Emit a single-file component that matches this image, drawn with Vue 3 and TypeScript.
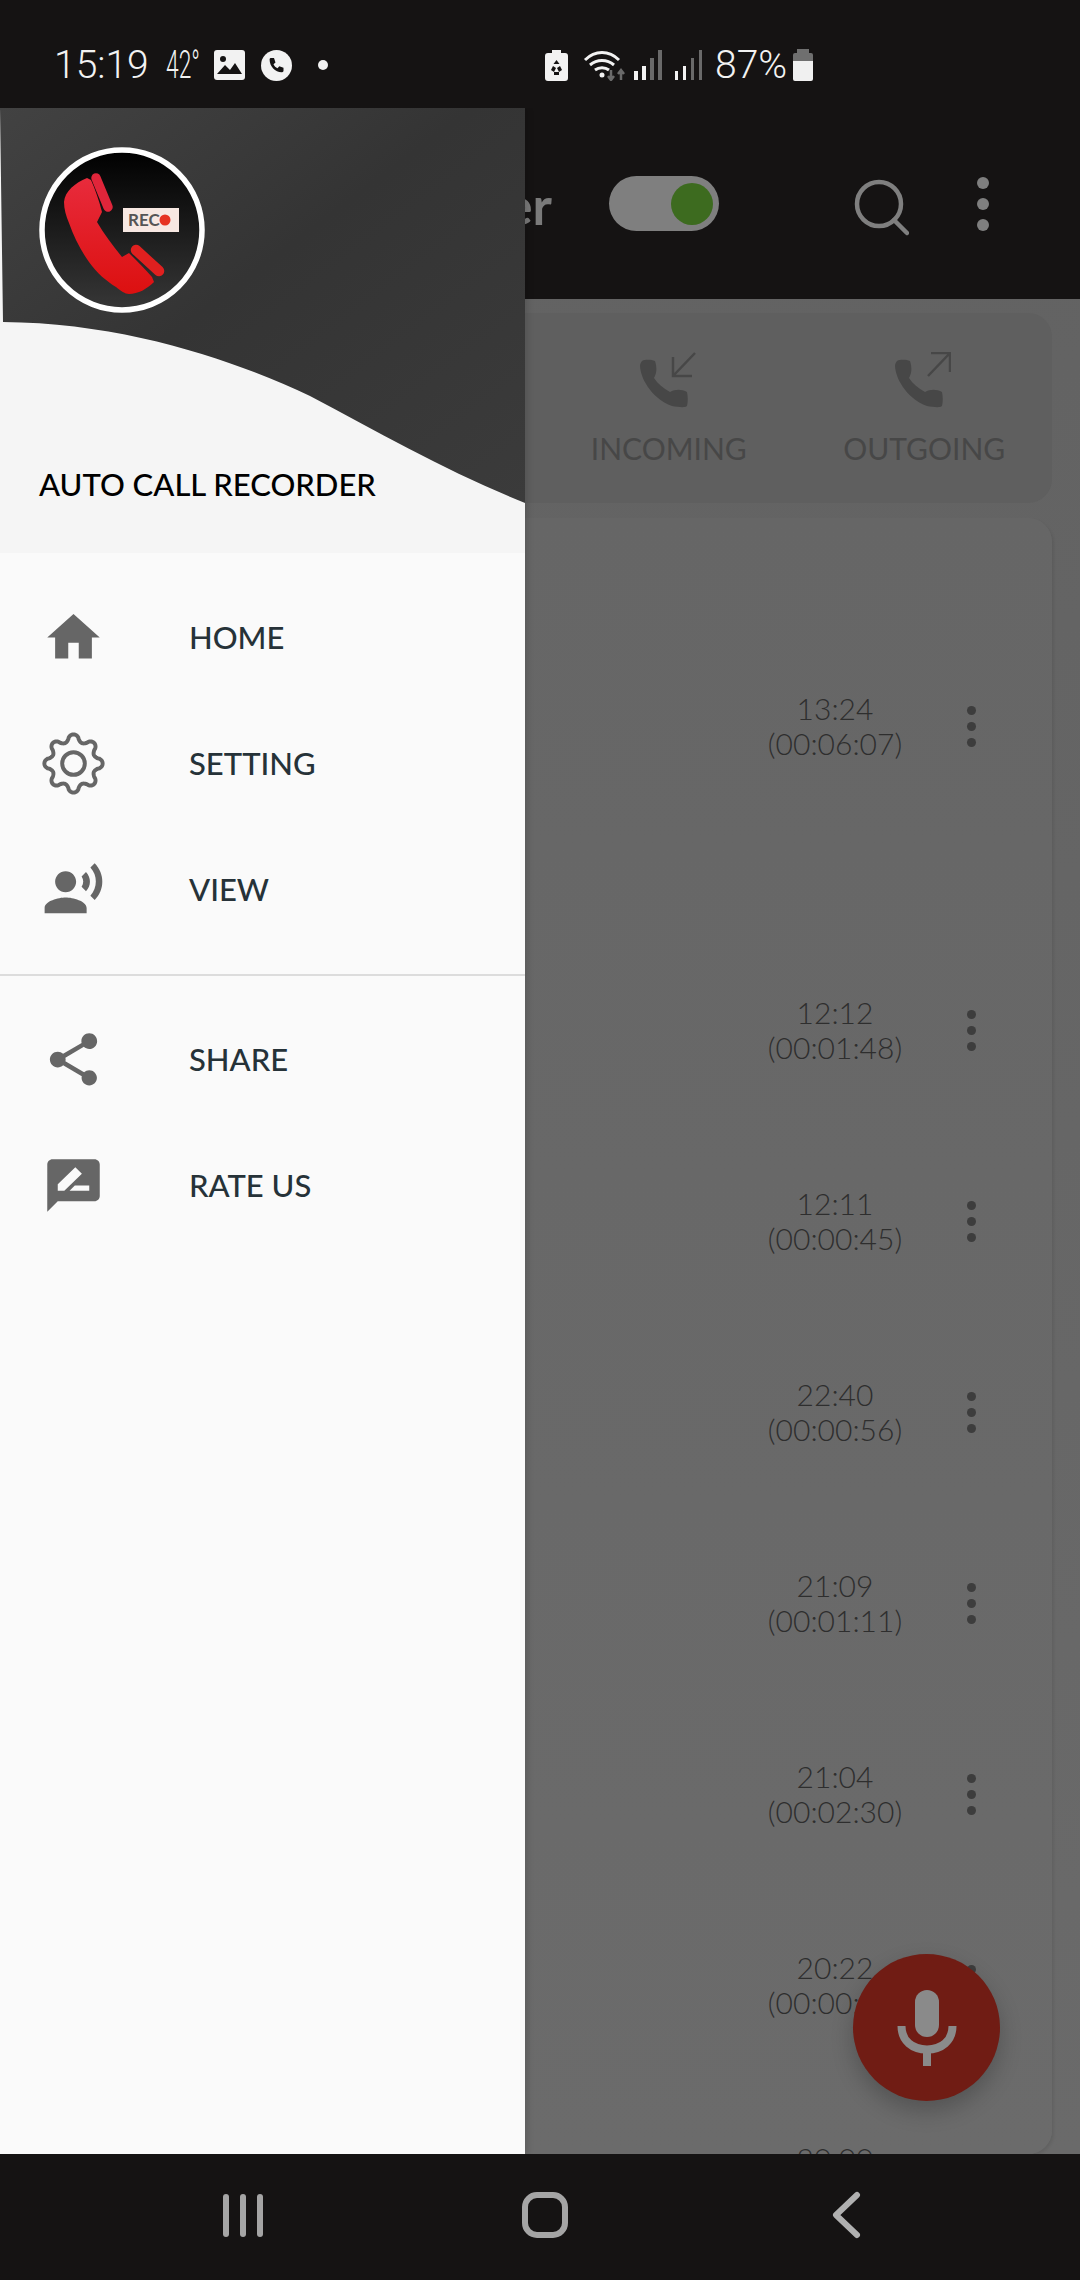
<template>
  <div class="phone">
    <div class="status-bar">
      <span class="clock">15:19</span>
      <span class="temp">42°</span>
      <svg class="st-image" width="31" height="30" viewBox="0 0 31 30">
        <rect width="31" height="30" rx="3" fill="#f2f2f2" />
        <circle cx="9" cy="9" r="3" fill="#151313" />
        <path d="M3 24l8-9 5 5 5-7 7 11z" fill="#151313" />
      </svg>
      <svg class="st-call" width="31" height="31" viewBox="0 0 31 31">
        <circle cx="15.5" cy="15.5" r="15.5" fill="#f2f2f2" />
        <path d="M10 8h3l1.500 4.500-2 1.800c.8 1.800 2.200 3.200 4 4l1.800-2 4.200 1.500v3c0 .8-.6 1.400-1.400 1.400C14.500 22.500 8.600 16.500 8.600 9.400 8.600 8.600 9.200 8 10 8z" fill="#151313" />
      </svg>
      <span class="st-dot"></span>
      <svg class="st-saver" width="23" height="31" viewBox="0 0 23 31">
        <path d="M7 0h9v3h4c2 0 3 1 3 3v22c0 2-1 3-3 3H3c-2 0-3-1-3-3V6c0-2 1-3 3-3h4z" fill="#f2f2f2" />
        <path d="M11.500 10l3 4h-6zM6 20l2-4 3 2-2 4zM17 20l-2-4-3 2 2 4zM9 22h5v3H9z" fill="#151313" />
      </svg>
      <svg class="st-wifi" width="44" height="33" viewBox="0 0 44 33">
        <path d="M2 12C12 2 26 2 36 12M7 17c7-6 17-6 24 0M12 22c4-3 10-3 14 0" fill="none" stroke="#f2f2f2" stroke-width="3" />
        <circle cx="19" cy="27" r="2.500" fill="#f2f2f2" />
        <path d="M28 22v10M25 28l3 4 3-4M38 32V22M35 26l3-4 3 4" fill="none" stroke="#6a6a6a" stroke-width="2.500" />
      </svg>
      <div class="signal">
        <i class="bar on" style="height: 9px"></i><i class="bar on" style="height: 14px"></i><i class="bar" style="height: 22px"></i><i class="bar" style="height: 30px"></i>
      </div>
      <div class="signal second">
        <i class="bar on" style="height: 9px"></i><i class="bar on" style="height: 14px"></i><i class="bar" style="height: 22px"></i><i class="bar" style="height: 30px"></i>
      </div>
      <span class="percent">87%</span>
      <div class="battery"><span class="battery-cap"></span><span class="battery-fill"></span></div>
    </div>

    <div class="main">
      <div class="app">
        <header class="app-bar">
          <span class="app-title">Auto Call Recorder</span>
          <div class="toggle"><span class="toggle-thumb"></span></div>
          <svg class="search" width="56" height="58" viewBox="0 0 56 58">
            <circle cx="26" cy="26" r="22" fill="none" stroke="#7f7f7f" stroke-width="4.500" />
            <path d="M41 42l13 13" stroke="#7f7f7f" stroke-width="4.500" stroke-linecap="round" />
          </svg>
          <div class="more">
            <span></span><span></span><span></span>
          </div>
        </header>

        <div class="tabs">
          <div class="tab tab-in">
            <svg width="56" height="56" viewBox="0 0 56 56">
              <path :d="handset" fill="#474747" />
              <path d="M55 1L33 24M33 5v19h19" fill="none" stroke="#474747" stroke-width="2.500" />
            </svg>
            <span>INCOMING</span>
          </div>
          <div class="tab">
            <svg width="56" height="56" viewBox="0 0 56 56">
              <path :d="handset" fill="#474747" />
              <path d="M33 24L55 1M36 1h19v19" fill="none" stroke="#474747" stroke-width="2.500" />
            </svg>
            <span>OUTGOING</span>
          </div>
        </div>

        <div class="list">
          <template v-for="(call, i) in calls" :key="i">
            <div v-if="call.header" class="list-header"></div>
            <div class="call-row">
              <div class="call-time">
                <span>{{ call.time }}</span>
                <span>({{ call.length }})</span>
              </div>
              <div class="call-more"><span></span><span></span><span></span></div>
            </div>
          </template>
        </div>
      </div>

      <button class="fab">
        <svg width="74" height="76" viewBox="0 0 74 76">
          <rect x="25" y="0" width="24" height="47" rx="12" fill="#8a8a8a" />
          <path d="M11.500 36c0 15 11 23.500 25.500 23.500s25.500-8.500 25.500-23.500" fill="none" stroke="#8a8a8a" stroke-width="8" />
          <rect x="33" y="60" width="8" height="16" fill="#8a8a8a" />
        </svg>
      </button>

      <aside class="drawer">
        <div class="drawer-head">
          <svg class="wave" width="525" height="446" viewBox="0 0 525 446">
            <defs>
              <linearGradient id="waveFill" x1="0" y1="0" x2="1" y2="1">
                <stop offset="0" stop-color="#424242" />
                <stop offset="0.45" stop-color="#343434" />
                <stop offset="1" stop-color="#3b3b3b" />
              </linearGradient>
            </defs>
            <path d="M0 0H525V395C450 365 380 325 310 288C240 255 130 215 3 214Z" fill="url(#waveFill)" />
          </svg>
          <svg class="logo" width="166" height="166" viewBox="0 0 166 166">
            <defs>
              <linearGradient id="logoBg" x1="0" y1="0" x2="0" y2="1">
                <stop offset="0" stop-color="#000000" />
                <stop offset="1" stop-color="#373737" />
              </linearGradient>
              <linearGradient id="logoRed" x1="0" y1="0" x2="0" y2="1">
                <stop offset="0" stop-color="#e82b3c" />
                <stop offset="1" stop-color="#dc1010" />
              </linearGradient>
            </defs>
            <circle cx="83" cy="83" r="80" fill="url(#logoBg)" stroke="#fff" stroke-width="5.500" />
            <path d="M48 31C36 36 26 44 25 55C25 62 27 69 30 76C35 90 42 104 50 115C58 126 67 134 77 140C82 144 86 147 90 147C99 147 108 142 115 135L113 130C106 122 98 114 90 106L83 110C74 99 65 87 58 75L63 65C60 53 56 42 52 33Z" fill="url(#logoRed)" />
            <path d="M57 31L69 60" stroke="#e0253a" stroke-width="9.500" stroke-linecap="round" />
            <path d="M97 103L120 124" stroke="#e0201f" stroke-width="10.500" stroke-linecap="round" />
            <rect x="84" y="61" width="56" height="24" fill="#f7e8e2" />
            <text x="89" y="79" class="logo-rec">REC</text>
            <circle cx="126" cy="73" r="5.500" fill="#e63322" />
          </svg>
          <h1 class="drawer-title">AUTO CALL RECORDER</h1>
        </div>

        <nav class="menu">
          <div v-for="item in mainMenu" :key="item.label" class="menu-item">
            <svg width="63" height="63" :viewBox="item.box">
              <path v-if="item.d" :d="item.d" fill="#666" />
              <template v-else>
                <path :d="gearPath" fill="none" stroke="#666" stroke-width="4" />
                <circle cx="32" cy="32" r="11.500" fill="none" stroke="#666" stroke-width="4" />
              </template>
            </svg>
            <span>{{ item.label }}</span>
          </div>
        </nav>
        <hr class="divider" />
        <nav class="menu second-menu">
          <div v-for="item in extraMenu" :key="item.label" class="menu-item">
            <svg width="63" height="63" :viewBox="item.box">
              <path :d="item.d" fill="#666" />
            </svg>
            <span>{{ item.label }}</span>
          </div>
        </nav>
      </aside>
    </div>

    <footer class="nav-bar">
      <div class="nav-slot">
        <div class="recents"><span></span><span></span><span></span></div>
      </div>
      <div class="nav-slot"><span class="nav-home"></span></div>
      <div class="nav-slot">
        <svg width="32" height="48" viewBox="0 0 32 48">
          <path d="M26 4L5 24l21 20" fill="none" stroke="#b0b0b0" stroke-width="6" stroke-linecap="round" stroke-linejoin="round" />
        </svg>
      </div>
    </footer>
  </div>
</template>

<script setup lang="ts">
interface Call {
  time: string;
  length: string;
  header?: boolean;
}

interface MenuItem {
  label: string;
  box: string;
  d?: string;
}

const calls: Call[] = [
  { time: '13:24', length: '00:06:07', header: true },
  { time: '12:12', length: '00:01:48', header: true },
  { time: '12:11', length: '00:00:45' },
  { time: '22:40', length: '00:00:56' },
  { time: '21:09', length: '00:01:11' },
  { time: '21:04', length: '00:02:30' },
  { time: '20:22', length: '00:00:31' },
  { time: '20:00', length: '00:00:20' },
];

const mainMenu: MenuItem[] = [
  { label: 'HOME', box: '0 0 24 24', d: 'M10 20v-6h4v6h5v-8h3L12 3 2 12h3v8z' },
  { label: 'SETTING', box: '0 0 64 64' },
  {
    label: 'VIEW',
    box: '0 0 24 24',
    d: 'M9 13c2.210 0 4-1.790 4-4s-1.790-4-4-4-4 1.790-4 4 1.790 4 4 4zm0 2c-2.670 0-8 1.340-8 4v2h16v-2c0-2.660-5.330-4-8-4zm7.760-9.640l-1.680 1.690c.84 1.180.84 2.710 0 3.890l1.680 1.690c2.020-2.020 2.020-5.070 0-7.270zM20.070 2l-1.630 1.630c2.770 3.020 2.770 7.560 0 10.740L20.070 16c3.900-3.890 3.910-9.950 0-14z',
  },
];

const extraMenu: MenuItem[] = [
  {
    label: 'SHARE',
    box: '0 0 24 24',
    d: 'M18 16.080c-.76 0-1.440.3-1.960.77L8.910 12.700c.05-.23.09-.46.09-.7s-.04-.47-.09-.7l7.050-4.110c.54.5 1.250.81 2.040.81 1.660 0 3-1.340 3-3s-1.340-3-3-3-3 1.340-3 3c0 .24.04.47.09.7L8.040 9.810C7.500 9.310 6.790 9 6 9c-1.660 0-3 1.340-3 3s1.340 3 3 3c.79 0 1.500-.31 2.040-.81l7.120 4.160c-.05.21-.08.43-.08.65 0 1.610 1.310 2.920 2.920 2.920 1.610 0 2.920-1.310 2.920-2.920s-1.310-2.920-2.920-2.920z',
  },
  {
    label: 'RATE US',
    box: '0 0 24 24',
    d: 'M20 2H4c-1.100 0-1.990.9-1.990 2L2 22l4-4h14c1.100 0 2-.9 2-2V4c0-1.100-.9-2-2-2zM6 14v-2.470L12.700 5l2.500 2.500L8.500 14H6zm12 0h-7.500l2-2H18v2z',
  },
];

const handset =
  'M2 9C6 7 12 8 15 9C17 15 17 21 14 26C18 32 23 36 30 40C35 37 42 37 47 40C48 45 48 50 47 54C45 56 38 55 32 54C15 48 1 30 0 14C0 12 1 10 2 9Z';

// eight rounded teeth, sampled around the circle
function buildGear(): string {
  const points: string[] = [];
  for (let i = 0; i < 240; i++) {
    const a = (i / 240) * Math.PI * 2;
    const wave = Math.cos(8 * a);
    const r = 26 + 3.6 * Math.sign(wave) * Math.pow(Math.abs(wave), 0.7);
    const x = 32 + r * Math.sin(a);
    const y = 32 - r * Math.cos(a);
    points.push(`${x.toFixed(2)} ${y.toFixed(2)}`);
  }
  return `M${points.join('L')}Z`;
}

const gearPath = buildGear();
</script>

<style scoped>
.phone {
  width: 1080px;
  height: 2280px;
  display: flex;
  flex-direction: column;
  overflow: hidden;
  background: #151313;
  font-family: Lato, 'Open Sans', sans-serif;
}

.status-bar {
  height: 108px;
  flex: none;
  box-sizing: border-box;
  display: flex;
  align-items: center;
  padding: 22px 0 0 54px;
  color: #f2f2f2;
  font-family: Roboto, sans-serif;
  font-weight: 300;
}

.clock {
  font-size: 39px;
  width: 112px;
}

.temp {
  font-size: 38px;
  width: 48px;
  transform: scaleX(0.6);
  transform-origin: left center;
}

.st-call {
  margin-left: 16px;
}

.st-dot {
  width: 10px;
  height: 10px;
  margin-left: 26px;
  border-radius: 50%;
  background: #f2f2f2;
}

.st-saver {
  margin-left: 217px;
}

.st-wifi {
  margin-left: 15px;
  margin-top: -2px;
}

.signal {
  display: flex;
  align-items: flex-end;
  gap: 4.500px;
  height: 30px;
  margin-left: 7px;
}

.signal.second {
  margin-left: 13px;
}

.bar {
  width: 3.500px;
  background: #6a6a6a;
}

.bar.on {
  background: #f2f2f2;
}

.percent {
  font-size: 39px;
  width: 78px;
  margin-left: 13px;
}

.battery {
  width: 20px;
  height: 32px;
  display: flex;
  flex-direction: column;
  align-items: center;
}

.battery-cap {
  width: 12px;
  height: 4px;
  background: #6f6f6f;
}

.battery-fill {
  flex: 1;
  width: 20px;
  border-radius: 2px;
  background: linear-gradient(#6f6f6f 0 8px, #f0f0f0 8px);
}

.main {
  position: relative;
  flex: 1;
  min-height: 0;
  overflow: hidden;
}

.app {
  height: 100%;
  display: flex;
  flex-direction: column;
  background: linear-gradient(#626262, #6a6a6a);
}

.app-bar {
  height: 191px;
  flex: none;
  display: flex;
  align-items: center;
  background: #151313;
}

.app-title {
  width: 552px;
  flex: none;
  text-align: right;
  white-space: nowrap;
  font-size: 52px;
  font-weight: 700;
  color: #7a7a7a;
  margin-top: 2px;
}

.toggle {
  width: 110px;
  height: 55px;
  margin-left: 57px;
  padding-right: 6px;
  box-sizing: border-box;
  display: flex;
  align-items: center;
  justify-content: flex-end;
  border-radius: 28px;
  background: #7f7f7f;
}

.toggle-thumb {
  width: 42px;
  height: 42px;
  border-radius: 50%;
  background: #3d6b1f;
}

.search {
  margin-left: 134px;
  margin-top: 6px;
}

.more {
  margin-left: 68px;
  display: flex;
  flex-direction: column;
  gap: 9px;
}

.more span {
  width: 12px;
  height: 12px;
  border-radius: 50%;
  background: #7f7f7f;
}

.tabs {
  flex: none;
  height: 190px;
  margin: 14px 28px 0 30px;
  box-sizing: border-box;
  padding-top: 39px;
  display: grid;
  grid-template-columns: repeat(4, 1fr);
  border-radius: 24px;
  background: #5f5f5f;
}

.tab {
  display: flex;
  flex-direction: column;
  align-items: center;
  gap: 22px;
  font-size: 30px;
  line-height: 36px;
  color: #474747;
}

.tab svg {
  margin-right: 2px;
}

.tab-in {
  grid-column: 3;
}

.list {
  flex: 1;
  min-height: 0;
  margin: 15px 28px 0 30px;
  overflow: hidden;
  border-radius: 0 24px 24px 0;
  background: linear-gradient(#666, #6b6b6b);
  box-shadow: 2px 2px 3px rgba(0, 0, 0, 0.08);
}

.list-header {
  height: 113px;
}

.call-row {
  height: 191px;
  display: flex;
  align-items: center;
  justify-content: flex-end;
  padding-right: 45px;
}

.call-time {
  width: 200px;
  margin-top: -2px;
  display: flex;
  flex-direction: column;
  align-items: center;
  font-size: 30px;
  line-height: 35px;
  font-weight: 300;
  color: #2e2e2e;
}

.call-more {
  width: 72px;
  display: flex;
  flex-direction: column;
  align-items: center;
  gap: 7px;
}

.call-more span {
  width: 9px;
  height: 9px;
  border-radius: 50%;
  background: #3d3d3d;
}

.fab {
  position: absolute;
  left: 853px;
  top: 1846px;
  width: 147px;
  height: 147px;
  padding: 0;
  display: flex;
  align-items: center;
  justify-content: center;
  border: none;
  border-radius: 50%;
  background: #701c14;
  box-shadow: 0 10px 22px rgba(0, 0, 0, 0.22);
}

.drawer {
  position: absolute;
  left: 0;
  top: 0;
  bottom: 0;
  width: 525px;
  background: #fafafa;
  box-shadow: 3px 0 6px rgba(0, 0, 0, 0.12);
}

.drawer-head {
  position: relative;
  height: 445px;
  box-sizing: border-box;
  padding: 39px 0 0 39px;
  background: #f5f5f5;
}

.wave {
  position: absolute;
  left: 0;
  top: 0;
}

.logo {
  position: relative;
  display: block;
}

.logo-rec {
  font-family: Lato, sans-serif;
  font-size: 17px;
  font-weight: 700;
  fill: #555;
}

.drawer-title {
  position: relative;
  margin: 151px 0 0;
  font-size: 31px;
  line-height: 40px;
  font-weight: 500;
  color: #000;
  white-space: nowrap;
}

.menu {
  padding-top: 21px;
}

.second-menu {
  padding-top: 20px;
}

.menu-item {
  height: 126px;
  display: flex;
  align-items: center;
  gap: 84px;
  padding-left: 42px;
  font-size: 31px;
  font-weight: 500;
  color: #263238;
}

.divider {
  height: 2px;
  margin: 22px 0 0;
  border: none;
  background: #dcdcdc;
}

.nav-bar {
  height: 126px;
  flex: none;
  display: flex;
  justify-content: center;
  align-items: center;
  padding: 0 0 4px 9px;
  box-sizing: border-box;
  background: #151313;
}

.nav-slot {
  width: 302px;
  display: flex;
  justify-content: center;
  align-items: center;
}

.recents {
  display: flex;
  gap: 11px;
}

.recents span {
  width: 6px;
  height: 43px;
  border-radius: 3px;
  background: #a5a5a5;
}

.nav-home {
  width: 46px;
  height: 46px;
  box-sizing: border-box;
  border: 6px solid #a5a5a5;
  border-radius: 15px;
}
</style>

<style>
html,
body {
  margin: 0;
  background: #151313;
}
</style>
